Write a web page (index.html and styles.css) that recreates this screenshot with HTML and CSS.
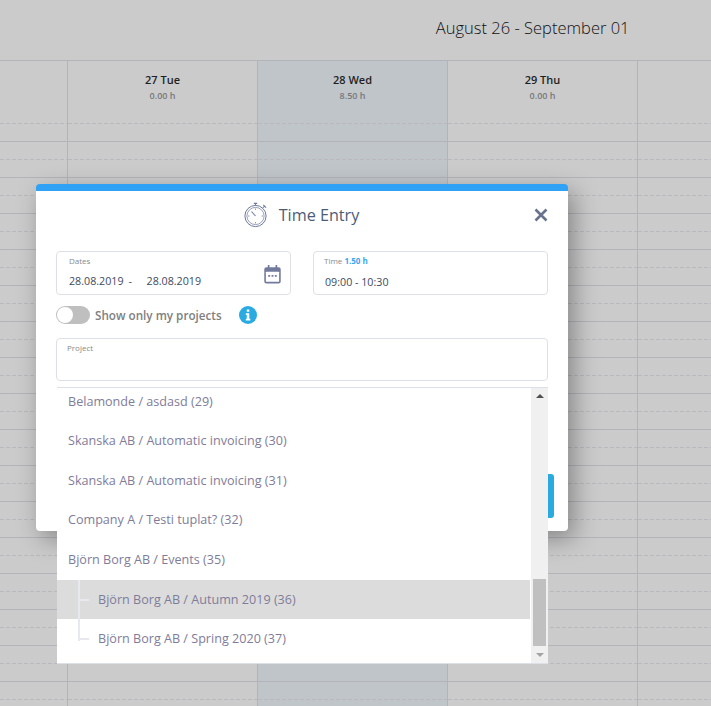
FILE: index.html
```html
<!DOCTYPE html>
<html lang="en">
<head>
<meta charset="utf-8">
<title>Time Entry</title>
<link rel="stylesheet" href="styles.css">
</head>
<body>
<div class="page">
  <div class="range-bar"><span class="range">August 26 - September 01</span></div>
  <div class="week">
    <div class="day day-edge"></div>
    <div class="day"><div class="day-head"><div class="day-name">27 Tue</div><div class="day-hours">0.00 h</div></div></div>
    <div class="day day-today"><div class="day-head"><div class="day-name">28 Wed</div><div class="day-hours">8.50 h</div></div></div>
    <div class="day"><div class="day-head"><div class="day-name">29 Thu</div><div class="day-hours">0.00 h</div></div></div>
    <div class="day day-rest"></div>
  </div>

  <div class="modal">
    <div class="modal-title">
      <svg class="watch" width="26" height="26" viewBox="0 0 26 26" fill="none" stroke="#6d7a9c">
        <circle cx="12.5" cy="14" r="10.6" stroke-width="1"/>
        <circle cx="12.5" cy="14" r="8.6" stroke-width=".7"/>
        <path d="M12.5 14 8.5 9.5" stroke-width="1.1"/>
        <path d="M12.5 3.4V1.600M10.800 1.400h3.400M20 5.600l1.600-1.600M20.300 2.800l2.800 2.800" stroke-width="1.1"/>
        <path d="M12.500 6.500v1.400M12.500 20v1.400M5 14h1.400M18.600 14H20" stroke-width=".8"/>
      </svg>
      <span class="title-text">Time Entry</span>
      <svg class="close" width="14" height="14" viewBox="0 0 14 14" stroke="#67728f" stroke-width="2.6" fill="none"><path d="M1.500 1.500 12.500 12.500M12.500 1.500 1.500 12.500"/></svg>
    </div>
    <div class="field-row">
      <div class="field field-dates">
        <div class="field-label">Dates</div>
        <div class="field-value dates"><span>28.08.2019</span><span class="dash">-</span><span>28.08.2019</span></div>
        <svg class="cal" width="17" height="19" viewBox="0 0 18 20"><path fill="#737b9d" d="M4 0h1.800v2.200h6.400V0H14v2.200h1.500A2.200 2.200 0 0 1 17.700 4.400v12.900a2.200 2.200 0 0 1-2.200 2.200H2.500a2.200 2.200 0 0 1-2.200-2.200V4.400A2.200 2.200 0 0 1 2.500 2.200H4z"/><rect x="2" y="7" width="14" height="10.700" rx=".6" fill="#fff"/><path fill="#737b9d" d="M4.500 10.500h2v2h-2zM8 10.500h2v2H8zM11.500 10.500h2v2h-2z"/></svg>
      </div>
      <div class="field">
        <div class="field-label">Time <b class="hours">1.50 h</b></div>
        <div class="field-value field-value-time">09:00 - 10:30</div>
      </div>
    </div>
    <div class="toggle-row">
      <span class="switch"><span class="knob"></span></span>
      <span class="toggle-label">Show only my projects</span>
      <svg class="info" width="18" height="18" viewBox="0 0 18 18"><circle cx="9" cy="9" r="9" fill="#29abe2"/><path fill="#fff" d="M7.800 3.500h2.500v2.300H7.800zM6.800 7.300h3.500v5.500h1v1.700H6.800v-1.700h1V9H6.800z"/></svg>
    </div>
    <div class="field field-project"><div class="field-label">Project</div></div>
    <div class="save-row"><span class="save"></span></div>

    <div class="dropdown">
      <ul class="options">
        <li class="option">Belamonde / asdasd (29)</li>
        <li class="option">Skanska AB / Automatic invoicing (30)</li>
        <li class="option">Skanska AB / Automatic invoicing (31)</li>
        <li class="option">Company A / Testi tuplat? (32)</li>
        <li class="option">Björn Borg AB / Events (35)</li>
        <li class="option option-child option-active">Björn Borg AB / Autumn 2019 (36)</li>
        <li class="option option-child option-last">Björn Borg AB / Spring 2020 (37)</li>
      </ul>
      <div class="scrollbar">
        <span class="arrow arrow-up"></span>
        <span class="thumb"></span>
        <span class="arrow arrow-down"></span>
      </div>
    </div>
  </div>
</div>
</body>
</html>
```
FILE: styles.css
```css
* { box-sizing: border-box; }
html, body { margin: 0; padding: 0; }
body {
  width: 711px;
  height: 706px;
  overflow: hidden;
  font-family: "Open Sans", sans-serif;
  background: #cbcbcb;
}
.page { position: relative; width: 711px; height: 706px; overflow: hidden; }
.range-bar {
  height: 60px;
  display: flex;
  justify-content: flex-end;
  align-items: center;
  padding: 0 81.500px 5px 0;
}
.range { font-size: 16.5px; font-weight: 300; color: #111; }
.week {
  height: 646px;
  display: flex;
  border-top: 1px solid #b3b4bb;
}
.day {
  position: relative;
  width: 190px;
  flex: none;
  border-right: 1px solid #b3b4bb;
}
.day::before {
  content: "";
  position: absolute;
  inset: 80px 0 0 0;
  background-image: repeating-linear-gradient(to bottom, #b3b4bb 0, #b3b4bb 1px, transparent 1px, transparent 36px);
}
.day::after {
  content: "";
  position: absolute;
  inset: 62px 0 0 0;
  background-image: repeating-linear-gradient(to right, #b9b9bd 0, #b9b9bd 4px, transparent 4px, transparent 6px);
  -webkit-mask-image: repeating-linear-gradient(to bottom, #000 0, #000 1px, transparent 1px, transparent 36px);
  mask-image: repeating-linear-gradient(to bottom, #000 0, #000 1px, transparent 1px, transparent 36px);
}
.day-edge { width: 68px; }
.day-today { background-color: #bfc5c9; }
.day-rest { flex: 1; border-right: 0; }
.day-head {
  padding-top: 11px;
  text-align: center;
}
.day-name { font-size: 11px; font-weight: 600; color: #1f1f1f; line-height: 15px; }
.day-hours { font-size: 9px; font-weight: 600; color: #77787c; line-height: 15px; margin-top: 1px; }

.modal {
  position: absolute;
  left: 36px;
  top: 184px;
  width: 532px;
  height: 347px;
  background: #fff;
  border-top: 7px solid #2fa2f5;
  border-radius: 4px;
  padding: 0 20px;
  box-shadow: 6px 8px 24px rgba(0, 0, 0, .34);
}
.modal-title {
  position: relative;
  height: 60px;
  display: flex;
  align-items: center;
  justify-content: center;
  gap: 10px;
  padding: 0 2px 13px 0;
}
.title-text { font-size: 16.2px; color: #4e5c77; }
.close { position: absolute; right: 0; top: 17px; }
.watch { display: block; }
.field-row { display: grid; grid-template-columns: 1fr 1fr; gap: 22px; }
.field {
  position: relative;
  height: 44px;
  border: 1px solid #dde1e7;
  border-radius: 4px;
  padding: 3px 10px;
}
.field-dates { padding-left: 12px; }
.field-label { font-size: 8px; color: #8a8a8a; line-height: 11px; }
.hours { color: #3aa6f2; font-weight: 700; }
.field-value { font-size: 10.7px; color: #3d4a60; line-height: 14px; margin-top: 8px; }
.field-value-time { padding-left: 1px; margin-top: 9px; }
.dates { display: flex; }
.dash { width: 18px; margin-left: 5px; }
.cal { position: absolute; right: 9px; top: 13px; }
.toggle-row {
  height: 43px;
  display: flex;
  align-items: center;
  padding-bottom: 3px;
}
.switch {
  width: 34px;
  height: 18px;
  border-radius: 9px;
  background: #bfbfbf;
  padding: 1px;
}
.knob { display: block; width: 16px; height: 16px; border-radius: 50%; background: #fff; }
.toggle-label { font-size: 11.7px; font-weight: 600; color: #808080; margin-left: 5px; }
.info { margin-left: 17px; }
.field-project { height: 43px; padding: 3px 10px; }
.save-row { display: flex; justify-content: flex-end; margin-top: 93px; margin-right: -6px; }
.save { width: 80px; height: 44px; background: #29abe2; border-radius: 3px; }

.dropdown {
  position: absolute;
  left: 21px;
  top: 196px;
  width: 491px;
  height: 277px;
  background: #fff;
  border-top: 1px solid #dde1e7;
  border-bottom: 1px solid #dde1e7;
  display: flex;
  overflow: hidden;
}
.options {
  flex: 1;
  margin: -6.400px 1px 0 0;
  padding: 0;
  list-style: none;
}
.option {
  position: relative;
  height: 39.600px;
  line-height: 39.600px;
  padding-left: 11px;
  font-size: 12.6px;
  color: #7f7c9a;
  white-space: nowrap;
}
.option-child { padding-left: 41px; }
.option-child::before {
  content: "";
  position: absolute;
  left: 21px;
  top: 0;
  bottom: 0;
  width: 2px;
  background: #e8e9ef;
}
.option-child::after {
  content: "";
  position: absolute;
  left: 21px;
  top: 19px;
  width: 11px;
  height: 2px;
  background: #e8e9ef;
}
.option-last::before { bottom: 18px; }
.option-active { background: #dcdcdc; }
.scrollbar {
  width: 17px;
  flex: none;
  background: #f0f0f0;
  position: relative;
  display: flex;
  flex-direction: column;
  align-items: center;
  justify-content: space-between;
  padding: 6px 0;
}
.arrow { width: 0; height: 0; border-left: 4px solid transparent; border-right: 4px solid transparent; }
.arrow-up { border-bottom: 4px solid #505050; }
.arrow-down { border-top: 4px solid #a3a3a3; }
.thumb {
  position: absolute;
  left: 2px;
  top: 191px;
  width: 13px;
  height: 67px;
  background: #c0c0c0;
}
```
